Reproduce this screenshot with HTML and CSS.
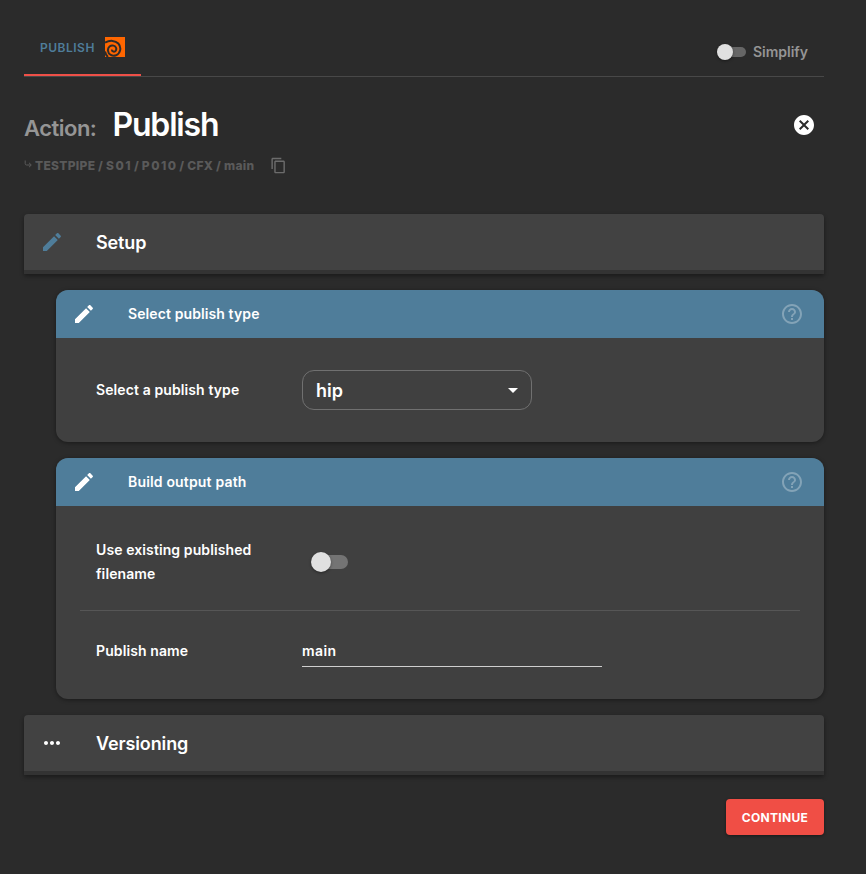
FILE: index.html
```html
<!DOCTYPE html>
<html lang="en">
<head>
<meta charset="utf-8">
<title>Publish</title>
<link rel="stylesheet" href="styles.css">
</head>
<body>
<nav class="topbar">
  <div class="tab"><span class="tab-label">PUBLISH</span>
    <svg class="logo" viewBox="0 0 20 20"><rect width="20" height="20" fill="#ff6600"/><path d="M0 5.500C5 2.900 10.500 3.500 13.300 6.500C16.800 10.300 15.500 16.300 11 18.300C7.500 19.700 3.200 17.500 2.900 13.500C2.700 10 5.700 7.900 8.500 8.600C11.200 9.300 12.200 12.300 10.300 14.200C8.800 15.300 6.800 14.300 7 12.700M0 14.500C.5 17 1.500 18.700 3 20" fill="none" stroke="#2b2b2b" stroke-width="2"/></svg>
  </div>
  <div class="simplify"><span class="switch small"></span><span class="simplify-label">Simplify</span></div>
</nav>
<header class="heading">
  <h1><span class="prefix">Action:</span><span class="title">Publish</span></h1>
  <svg class="close" viewBox="0 0 24 24"><path d="M12 2C6.470 2 2 6.470 2 12s4.470 10 10 10 10-4.470 10-10S17.530 2 12 2zm5 13.590L15.590 17 12 13.410 8.410 17 7 15.590 10.590 12 7 8.410 8.410 7 12 10.590 15.590 7 17 8.410 13.410 12 17 15.590z"/></svg>
</header>
<div class="crumbs">
  <svg class="turn" viewBox="0 0 9 9"><path d="M1.200 .5V3.500Q1.200 5 2.700 5H7M5 2.800L7.300 5L5 7.200"/></svg>
  <span class="path">TESTPIPE / <span class="code">S01</span> / <span class="code">P010</span> / CFX / main</span>
  <svg class="copy" viewBox="0 0 24 24"><path d="M16 1H4c-1.100 0-2 .9-2 2v14h2V3h12V1zm3 4H8c-1.100 0-2 .9-2 2v14c0 1.100.9 2 2 2h11c1.100 0 2-.9 2-2V7c0-1.100-.9-2-2-2zm0 16H8V7h11v14z"/></svg>
</div>
<section class="group">
  <svg class="icon blue" viewBox="0 0 24 24"><path d="M3 17.250V21h3.750L17.810 9.940l-3.750-3.750L3 17.250zM20.710 7.040c.39-.39.39-1.020 0-1.410l-2.340-2.340c-.39-.39-1.020-.39-1.410 0l-1.830 1.830 3.750 3.750 1.830-1.830z"/></svg>
  <h2>Setup</h2>
</section>
<section class="card">
  <div class="card-head">
    <svg class="icon" viewBox="0 0 24 24"><path d="M3 17.250V21h3.750L17.810 9.940l-3.750-3.750L3 17.250zM20.710 7.040c.39-.39.39-1.020 0-1.410l-2.340-2.340c-.39-.39-1.020-.39-1.410 0l-1.830 1.830 3.750 3.750 1.830-1.830z"/></svg>
    <h3>Select publish type</h3>
    <svg class="help" viewBox="0 0 24 24"><path d="M11 18h2v-2h-2v2zm1-16C6.480 2 2 6.480 2 12s4.480 10 10 10 10-4.480 10-10S17.520 2 12 2zm0 18c-4.410 0-8-3.590-8-8s3.590-8 8-8 8 3.590 8 8-3.590 8-8 8zm0-14c-2.210 0-4 1.790-4 4h2c0-1.100.9-2 2-2s2 .9 2 2c0 2-3 1.750-3 5h2c0-2.250 3-2.500 3-5 0-2.210-1.790-4-4-4z"/></svg>
  </div>
  <div class="row type-row">
    <span class="label">Select a publish type</span>
    <div class="select"><span>hip</span><svg class="arrow" viewBox="0 0 24 24"><path d="M7 10l5 5 5-5z"/></svg></div>
  </div>
</section>
<section class="card">
  <div class="card-head">
    <svg class="icon" viewBox="0 0 24 24"><path d="M3 17.250V21h3.750L17.810 9.940l-3.750-3.750L3 17.250zM20.710 7.040c.39-.39.39-1.020 0-1.410l-2.340-2.340c-.39-.39-1.020-.39-1.410 0l-1.830 1.830 3.750 3.750 1.830-1.830z"/></svg>
    <h3 class="t-build">Build output path</h3>
    <svg class="help" viewBox="0 0 24 24"><path d="M11 18h2v-2h-2v2zm1-16C6.480 2 2 6.480 2 12s4.480 10 10 10 10-4.480 10-10S17.520 2 12 2zm0 18c-4.410 0-8-3.590-8-8s3.590-8 8-8 8 3.590 8 8-3.590 8-8 8zm0-14c-2.210 0-4 1.790-4 4h2c0-1.100.9-2 2-2s2 .9 2 2c0 2-3 1.750-3 5h2c0-2.250 3-2.500 3-5 0-2.210-1.790-4-4-4z"/></svg>
  </div>
  <div class="row existing-row">
    <span class="label">Use existing published<br>filename</span>
    <span class="switch"></span>
  </div>
  <div class="divider"></div>
  <div class="row name-row">
    <span class="label">Publish name</span>
    <div class="field">main</div>
  </div>
</section>
<section class="group">
  <svg class="icon" viewBox="0 0 24 24"><path d="M6 10c-1.100 0-2 .9-2 2s.9 2 2 2 2-.9 2-2-.9-2-2-2zm12 0c-1.100 0-2 .9-2 2s.9 2 2 2 2-.9 2-2-.9-2-2-2zm-6 0c-1.100 0-2 .9-2 2s.9 2 2 2 2-.9 2-2-.9-2-2-2z"/></svg>
  <h2>Versioning</h2>
</section>
<div class="actions"><button>CONTINUE</button></div>
</body>
</html>
```
FILE: styles.css
```css
* { box-sizing: border-box; }
body {
  margin: 0;
  padding: 20px 42px 0 24px;
  height: 874px;
  overflow: hidden;
  background: #2b2b2b;
  color: #fff;
  font-family: Inter, "Liberation Sans", sans-serif;
  font-weight: 600;
}
svg { display: block; fill: currentColor; flex: none; }
h1, h2, h3 { margin: 0; font-weight: 600; white-space: nowrap; }
.topbar { height: 57px; display: flex; justify-content: space-between; border-bottom: 1px solid #484848; }
.tab { width: 117px; height: 56px; padding: 0 16px; display: flex; align-items: center; justify-content: space-between; border-bottom: 2px solid #ef5048; color: #4f7d9a; font-size: 12px; letter-spacing: .5px; }
.logo { width: 20px; height: 20px; }
.simplify { display: flex; align-items: center; gap: 7px; margin: 7px 16px 0 0; color: #959595; font-size: 14px; }
.switch { position: relative; width: 34px; height: 14px; margin-left: 12px; border-radius: 7px; background: #747474; }
.switch::before { content: ""; position: absolute; left: -3px; top: -3px; width: 20px; height: 20px; border-radius: 50%; background: #e0e0e0; box-shadow: 0 1px 3px rgba(0, 0, 0, .4); }
.switch.small { width: 26px; height: 10px; margin: 0; background: #666; }
.switch.small::before { width: 16px; height: 16px; }
.heading { height: 71px; display: flex; justify-content: space-between; align-items: flex-start; padding: 28px 8px 0 0; }
h1 { display: flex; align-items: baseline; gap: 16px; line-height: 40px; }
.prefix { color: #959595; font-size: 22px; letter-spacing: -.5px; }
.title { font-size: 32px; letter-spacing: -1.150px; }
.close { width: 24px; height: 24px; margin-top: 8px; }
.crumbs { height: 35px; padding-bottom: 1px; display: flex; align-items: center; color: #5a5a5a; font-size: 12px; }
.turn { width: 9px; height: 9px; margin-right: 2px; margin-bottom: 1px; fill: none; stroke: currentColor; }
.path { width: 219px; margin-right: 16px; white-space: nowrap; font-weight: 800; letter-spacing: .3px; word-spacing: -.1px; }
.code { letter-spacing: 1.500px; margin-right: -1px; }
.copy { width: 17px; height: 17px; color: #6c6c6c; }
.group { display: flex; align-items: center; height: 60px; margin-top: 31px; padding: 0 16px; border-bottom: 4px solid #333; border-radius: 4px 4px 0 0; background: #424242; box-shadow: 0 2px 4px rgba(0, 0, 0, .4); }
.icon { width: 24px; height: 24px; margin-right: 32px; }
.blue { color: #4f7d9a; }
h2 { font-size: 18px; letter-spacing: -.12px; }
.card { margin: 16px 0 0 32px; border-radius: 12px; background: #404040; overflow: hidden; box-shadow: 0 1px 4px rgba(0, 0, 0, .4); }
.card-head { height: 48px; display: flex; align-items: center; padding: 0 20px 0 16px; background: #4f7d9a; }
h3 { font-size: 14px; padding-bottom: 2px; letter-spacing: .1px; }
.t-build { letter-spacing: .17px; }
.help { width: 24px; height: 24px; margin-left: auto; color: #83a3b7; }
.row { display: flex; align-items: center; padding-left: 40px; }
.label { width: 206px; font-size: 14px; line-height: 24px; letter-spacing: .1px; white-space: nowrap; }
.type-row { height: 104px; }
.select { width: 230px; height: 40px; display: flex; align-items: center; justify-content: space-between; padding: 0 6px 0 13px; border: 1px solid #707070; border-radius: 12px; font-size: 18px; }
.arrow { width: 24px; height: 24px; }
.existing-row { height: 104px; padding-top: 8px; }
.divider { height: 1px; margin: 0 24px; background: #565656; }
.name-row { height: 88px; padding-bottom: 8px; }
.field { width: 300px; height: 32px; border-bottom: 1px solid #cfcfcf; font-size: 14px; line-height: 32px; letter-spacing: .4px; }
.card + .group { margin-top: 16px; }
.actions { display: flex; justify-content: flex-end; margin-top: 24px; }
button { width: 98px; height: 36px; padding: 0; border: 0; border-radius: 4px; background: #f04e45; color: #fff; font: 700 12px Inter, sans-serif; letter-spacing: .3px; box-shadow: 0 1px 3px rgba(0, 0, 0, .4); }
```
